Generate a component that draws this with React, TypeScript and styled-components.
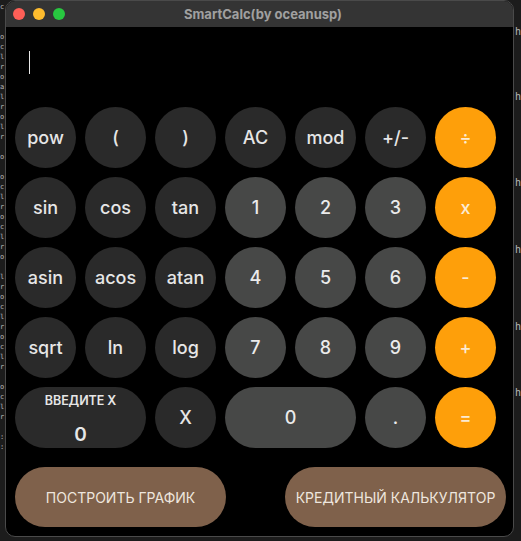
import React from "react";
import styled, { createGlobalStyle } from "styled-components";

const Global = createGlobalStyle`
  html, body { margin: 0; padding: 0; background: #1c1c1c; }
  * { box-sizing: border-box; }
`;

const Desktop = styled.div`
  display: flex;
  width: 521px;
  height: 541px;
  overflow: hidden;
  background: #1c1c1c;
`;

const Strip = styled.div<{ $w: number; $align: "left" | "right" }>`
  width: ${(p) => p.$w}px;
  flex: none;
  overflow: hidden;
  font-family: "DejaVu Sans Mono", "Liberation Mono", monospace;
  font-size: ${(p) => (p.$align === "left" ? 7 : 10)}px;
  line-height: 10px;
  color: #b8b8b8;
  white-space: pre;
  padding-top: ${(p) => (p.$align === "left" ? 2 : 0)}px;
  padding-left: ${(p) => (p.$align === "right" ? 1 : 0)}px;
`;

const StripLine = styled.div<{ $h: number }>`
  height: ${(p) => p.$h}px;
`;

const Window = styled.div`
  width: 509px;
  height: 537px;
  flex: none;
  display: flex;
  flex-direction: column;
  background: #000;
  border: 1px solid #4a4a4a;
  border-radius: 10px;
  overflow: hidden;
`;

const TitleBar = styled.div`
  height: 26px;
  flex: none;
  display: flex;
  align-items: center;
  background: #343434;
  padding-left: 7px;
`;

const Lights = styled.div`
  display: flex;
  gap: 8px;
`;

const Light = styled.span<{ $c: string }>`
  width: 12px;
  height: 12px;
  border-radius: 50%;
  background: ${(p) => p.$c};
`;

const Title = styled.div`
  flex: 1;
  text-align: center;
  margin-left: -52px;
  font-family: Inter, "Liberation Sans", sans-serif;
  font-weight: 700;
  font-size: 13px;
  color: #a0a0a0;
`;

const Display = styled.div`
  height: 80px;
  flex: none;
  padding: 24px 0 0 23px;
`;

const Cursor = styled.div`
  width: 1px;
  height: 23px;
  background: #e8e8e8;
`;

const Keypad = styled.div`
  display: grid;
  grid-template-columns: repeat(7, 61px);
  grid-auto-rows: 61px;
  gap: 9px;
  padding-left: 9px;
`;

type Kind = "fn" | "num" | "op";

const bg: Record<Kind, string> = {
  fn: "#2a2a2a",
  num: "#474847",
  op: "#fe9f0a",
};

const fg: Record<Kind, string> = {
  fn: "#e6e6e6",
  num: "#ebebeb",
  op: "#fcebd2",
};

const Key = styled.button<{ $kind: Kind; $span?: number }>`
  grid-column: span ${(p) => p.$span ?? 1};
  border: none;
  margin: 0;
  padding: 0;
  border-radius: 31px;
  background: ${(p) => bg[p.$kind]};
  color: ${(p) => fg[p.$kind]};
  font-family: Inter, "Liberation Sans", sans-serif;
  font-size: 18px;
  font-weight: 500;
  display: flex;
  flex-direction: column;
  align-items: center;
  justify-content: center;
`;

const XLabel = styled.span`
  font-size: 12.5px;
  font-weight: 600;
  letter-spacing: -0.1px;
  margin-top: 4px;
`;

const XValue = styled.span`
  font-size: 19px;
  font-weight: 600;
  margin-top: 15px;
`;

const BottomRow = styled.div`
  display: flex;
  justify-content: space-between;
  padding: 0 7px 0 9px;
  margin-top: 19px;
`;

const Pill = styled.button<{ $w: number }>`
  width: ${(p) => p.$w}px;
  height: 60px;
  border: none;
  border-radius: 30px;
  background: #7f614b;
  color: #eee6de;
  font-family: Inter, "Liberation Sans", sans-serif;
  font-size: 14px;
  font-weight: 400;
  padding: 0;
`;

const keys: { label: string; kind: Kind }[][] = [
  [
    { label: "pow", kind: "fn" },
    { label: "(", kind: "fn" },
    { label: ")", kind: "fn" },
    { label: "AC", kind: "fn" },
    { label: "mod", kind: "fn" },
    { label: "+/-", kind: "fn" },
    { label: "÷", kind: "op" },
  ],
  [
    { label: "sin", kind: "fn" },
    { label: "cos", kind: "fn" },
    { label: "tan", kind: "fn" },
    { label: "1", kind: "num" },
    { label: "2", kind: "num" },
    { label: "3", kind: "num" },
    { label: "x", kind: "op" },
  ],
  [
    { label: "asin", kind: "fn" },
    { label: "acos", kind: "fn" },
    { label: "atan", kind: "fn" },
    { label: "4", kind: "num" },
    { label: "5", kind: "num" },
    { label: "6", kind: "num" },
    { label: "-", kind: "op" },
  ],
  [
    { label: "sqrt", kind: "fn" },
    { label: "ln", kind: "fn" },
    { label: "log", kind: "fn" },
    { label: "7", kind: "num" },
    { label: "8", kind: "num" },
    { label: "9", kind: "num" },
    { label: "+", kind: "op" },
  ],
];

const leftLines = [
  "c", "", "", "o", "c", "l", "r", "o", "a", "l", "r", "o", "l", "r", "", "o",
  "", "o", "c", "l", "r", "o", "c", "l", "r", "o", "", "l", "r", "o",
  "c", "l", "r", "o", "c", "l", "r", "", "o", "c", "l", "r", "", ":", ":",
];

const rightMarks = [
  { h: 27, t: "" },
  { h: 65, t: "h" },
  { h: 86, t: "h" },
  { h: 67, t: "h" },
  { h: 77, t: "h" },
  { h: 66, t: "h" },
  { h: 60, t: "h" },
];

export default function App() {
  return (
    <>
      <Global />
      <Desktop>
        <Strip $w={5} $align="left">
          {leftLines.map((l, i) => (
            <StripLine key={i} $h={10}>
              {l}
            </StripLine>
          ))}
        </Strip>
        <Window>
          <TitleBar>
            <Lights>
              <Light $c="#fe5f57" />
              <Light $c="#febc2e" />
              <Light $c="#28c840" />
            </Lights>
            <Title>SmartCalc(by oceanusp)</Title>
          </TitleBar>
          <Display>
            <Cursor />
          </Display>
          <Keypad>
            {keys.flat().map((k, i) => (
              <Key key={i} $kind={k.kind}>
                {k.label}
              </Key>
            ))}
            <Key $kind="fn" $span={2}>
              <XLabel>ВВЕДИТЕ Х</XLabel>
              <XValue>0</XValue>
            </Key>
            <Key $kind="fn">X</Key>
            <Key $kind="num" $span={2}>
              0
            </Key>
            <Key $kind="num">.</Key>
            <Key $kind="op">=</Key>
          </Keypad>
          <BottomRow>
            <Pill $w={211}>ПОСТРОИТЬ ГРАФИК</Pill>
            <Pill $w={221}>КРЕДИТНЫЙ КАЛЬКУЛЯТОР</Pill>
          </BottomRow>
        </Window>
        <Strip $w={7} $align="right">
          {rightMarks.map((m, i) => (
            <StripLine key={i} $h={m.h}>
              {m.t}
            </StripLine>
          ))}
        </Strip>
      </Desktop>
    </>
  );
}
